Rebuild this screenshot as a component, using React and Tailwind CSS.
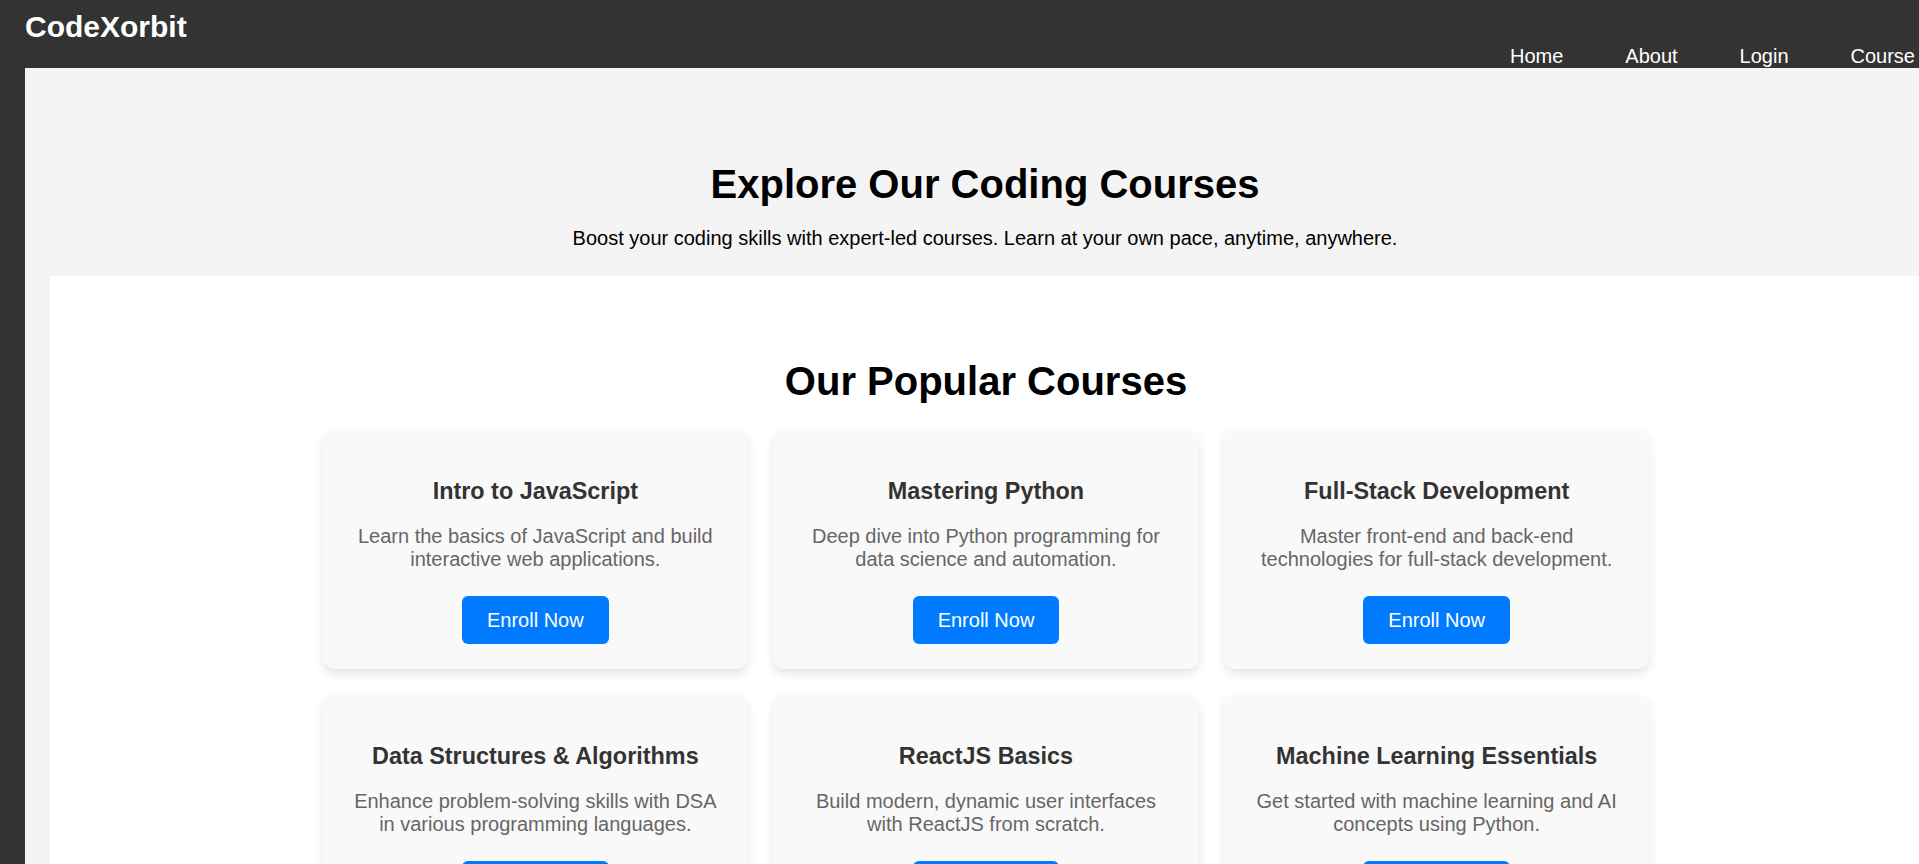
import React from 'react'

const courses = [
  {
    title: 'Intro to JavaScript',
    text: 'Learn the basics of JavaScript and build interactive web applications.',
  },
  {
    title: 'Mastering Python',
    text: 'Deep dive into Python programming for data science and automation.',
  },
  {
    title: 'Full-Stack Development',
    text: 'Master front-end and back-end technologies for full-stack development.',
  },
  {
    title: 'Data Structures & Algorithms',
    text: 'Enhance problem-solving skills with DSA in various programming languages.',
  },
  {
    title: 'ReactJS Basics',
    text: 'Build modern, dynamic user interfaces with ReactJS from scratch.',
  },
  {
    title: 'Machine Learning Essentials',
    text: 'Get started with machine learning and AI concepts using Python.',
  },
]

const navLinks = ['Home', 'About', 'Login', 'Course']

const CourseCard = ({ title, text }) => (
  <div className="bg-[#f9f9f9] rounded-[12px] shadow-[0_5px_10px_rgba(0,0,0,0.1)] p-[25px] text-center">
    <h3 className="mt-[24px] text-[23.4px] leading-[27px] font-bold text-[#333]">{title}</h3>
    <p className="mt-[20px] text-[20px] leading-[23px] text-[#666]">{text}</p>
    <button className="mt-[25px] bg-[#007bff] text-white text-[20px] leading-[23px] px-[25px] py-[12.5px] rounded-[6px]">
      Enroll Now
    </button>
  </div>
)

export default function App() {
  return (
    <div className="h-screen overflow-hidden bg-[#333] font-['Liberation_Sans',Arial,sans-serif]">
      {/* Header */}
      <header className="h-[68px] flex justify-between pl-[25px] pr-[4px]">
        <div className="pt-[10px] text-white text-[30px] leading-[34px] font-bold">CodeXorbit</div>
        <nav className="self-end flex gap-[62px] text-white text-[20px] leading-[23px]">
          {navLinks.map((l) => (
            <a key={l} href="#" className="text-white">
              {l}
            </a>
          ))}
        </nav>
      </header>

      <main className="ml-[25px] w-[1920px] bg-[#f4f4f4]">
        {/* Hero */}
        <section className="pt-[93px] pb-[26px] text-center text-black">
          <h1 className="text-[40px] leading-[46px] font-bold">Explore Our Coding Courses</h1>
          <p className="mt-[20px] text-[20px] leading-[23px]">
            Boost your coding skills with expert-led courses. Learn at your own pace, anytime, anywhere.
          </p>
        </section>

        {/* Courses */}
        <section className="ml-[25px] w-[1872px] bg-white pt-[82px] pb-[50px]">
          <h2 className="text-center text-[40px] leading-[46px] font-bold text-black">Our Popular Courses</h2>
          <div className="mt-[25px] mx-auto w-[1327px] grid grid-cols-3 gap-[25px]">
            {courses.map((c) => (
              <CourseCard key={c.title} {...c} />
            ))}
          </div>
        </section>
      </main>
    </div>
  )
}
